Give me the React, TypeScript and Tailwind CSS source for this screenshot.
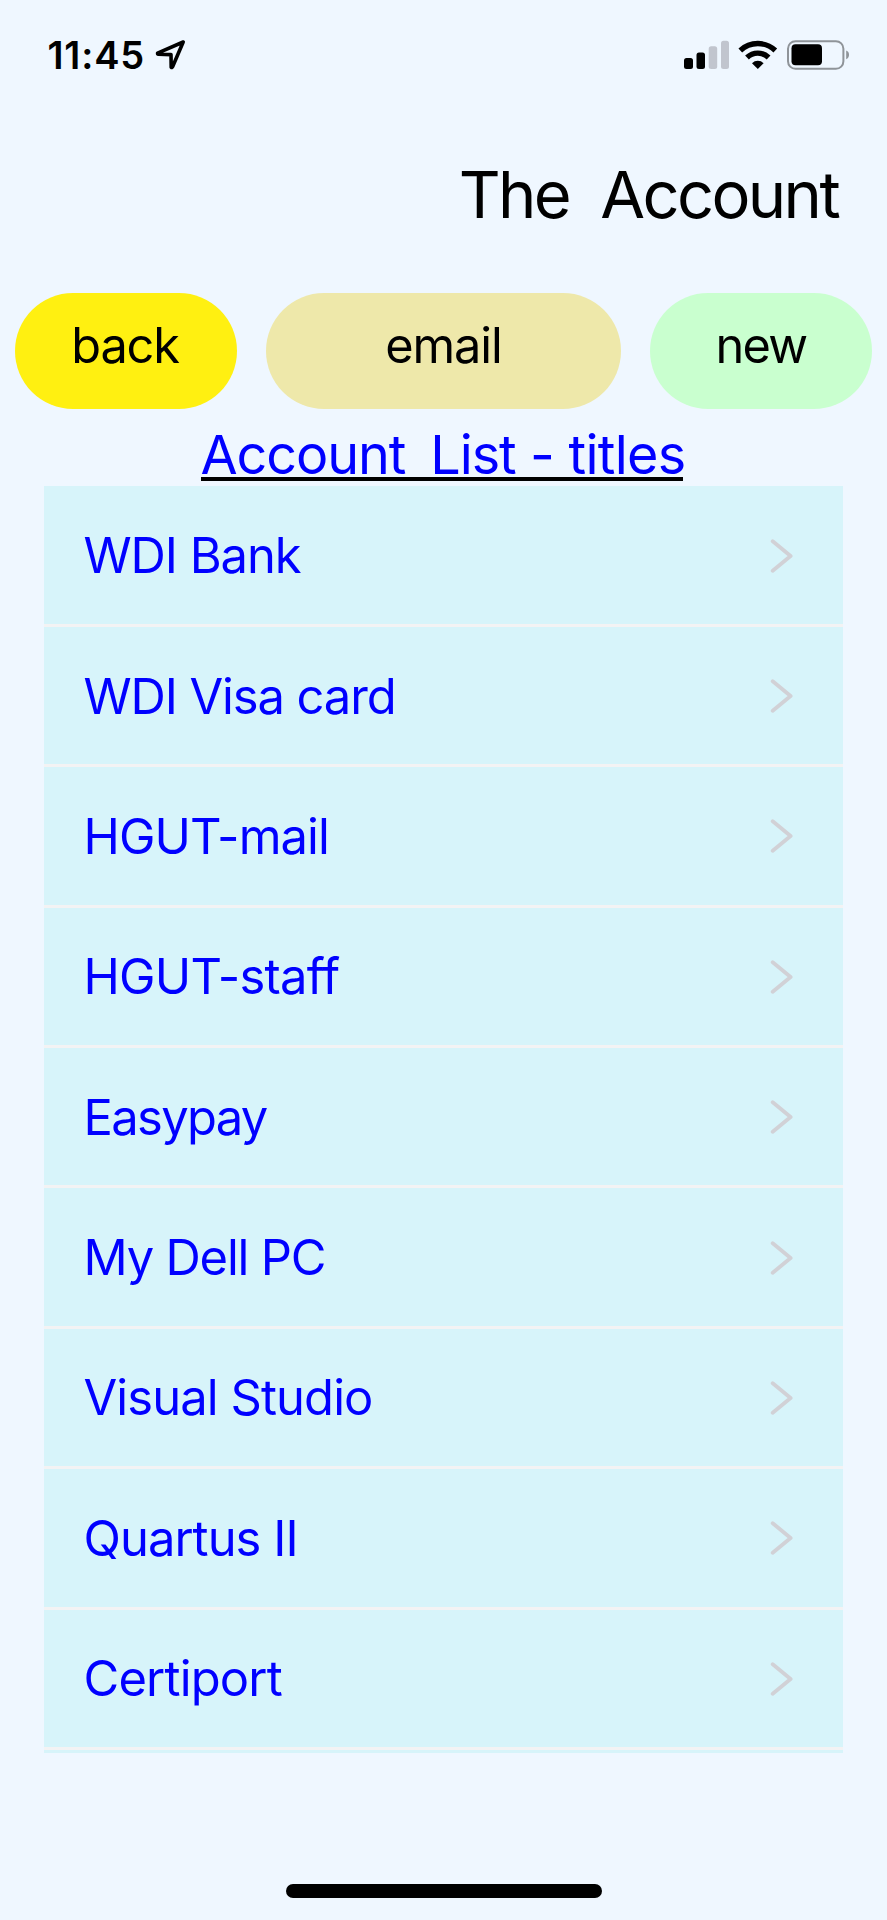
import { FC } from "react";
import clsx from "clsx";

type AccountType = {
  title: string;
  tracking: string;
};

const accounts: AccountType[] = [
  { title: "WDI Bank", tracking: "tracking-[-1.05px]" },
  { title: "WDI Visa card", tracking: "tracking-[-1.1px]" },
  { title: "HGUT-mail", tracking: "tracking-[-0.9px]" },
  { title: "HGUT-staff", tracking: "tracking-[-0.75px]" },
  { title: "Easypay", tracking: "tracking-[-1.65px]" },
  { title: "My Dell PC", tracking: "tracking-[-1.2px]" },
  { title: "Visual Studio", tracking: "tracking-[-0.9px]" },
  { title: "Quartus II", tracking: "tracking-[-0.95px]" },
  { title: "Certiport", tracking: "tracking-[-0.8px]" },
];

const StatusBar: FC = () => (
  <div className="flex items-center justify-between h-[110px] pl-[47.5px] pr-[37px] text-black">
    <div className="flex items-center">
      <span className="w-[106.5px] text-[38px] leading-none font-semibold whitespace-nowrap tracking-[0.8px]">
        11:45
      </span>
      <svg width="32" height="32" viewBox="0 0 32 32" fill="none">
        <path
          d="M29.2 3 L3.6 14.1 Q3.4 15.2 4.4 15.3 L17 15.6 L17.2 28.2 Q18 29 18.6 27.8 Z"
          stroke="black"
          strokeWidth="3.6"
          strokeLinejoin="round"
        />
      </svg>
    </div>
    <svg width="166" height="32" viewBox="684 39 166 32">
      <rect x="684" y="58" width="9" height="11" rx="2.5" />
      <rect x="696.5" y="52.5" width="8.5" height="16.5" rx="2.5" />
      <rect x="708.7" y="46.3" width="8.5" height="22.7" rx="2.5" fill="#c1c5ce" />
      <rect x="721" y="40.7" width="8" height="28.3" rx="2.5" fill="#c1c5ce" />
      <path
        d="M740.3 50.5 A25.5 25.5 0 0 1 775.3 50.5"
        fill="none"
        stroke="black"
        strokeWidth="5.4"
      />
      <path
        d="M747 57.5 A15.5 15.5 0 0 1 768.6 57.5"
        fill="none"
        stroke="black"
        strokeWidth="5.4"
      />
      <path d="M752 63.2 A8.3 8.3 0 0 1 763.6 63.2 L757.8 69 Z" />
      <rect
        x="788"
        y="41.2"
        width="55.4"
        height="27.6"
        rx="7.5"
        fill="none"
        stroke="#8f9499"
        strokeWidth="2"
      />
      <rect x="791.5" y="44.3" width="30.5" height="21" rx="4" />
      <path d="M846.2 50.5 Q849 51.5 849 54.8 Q849 58 846.2 59.2 Z" fill="#8f9499" />
    </svg>
  </div>
);

const PillButton: FC<{ label: string; className: string }> = ({ label, className }) => (
  <button
    className={clsx(
      "flex items-center justify-center h-[116px] pb-[9px] rounded-full text-[48.7px] leading-none text-black",
      className
    )}
  >
    {label}
  </button>
);

const AccountRow: FC<{ item: AccountType }> = ({ item }) => (
  <li>
    <div className="flex items-center justify-between h-[137.4px] pt-px pl-[39.5px] pr-[50px]">
      <span
        className={clsx(
          "pt-[2px] text-[48.9px] leading-none text-[#0000ff] whitespace-nowrap",
          item.tracking
        )}
      >
        {item.title}
      </span>
      <svg width="24" height="36" viewBox="0 0 24 36" fill="none">
        <path
          d="M3.7 3.2 L21.6 18 L3.7 32.8"
          stroke="#d1d1d6"
          strokeWidth="3.8"
          strokeLinecap="round"
          strokeLinejoin="round"
        />
      </svg>
    </div>
    <div className="h-[3px] bg-[#f3f3f4]" />
  </li>
);

const App: FC = () => {
  return (
    <div className="flex flex-col w-[887px] h-[1920px] bg-[#eff7ff] font-['Inter',sans-serif] overflow-hidden">
      <StatusBar />

      <h1 className="h-[183px] pt-[52px] pr-[49px] text-right text-[65px] leading-[65px] text-black whitespace-pre tracking-[-2.65px]">
        {"The  Account"}
      </h1>

      <div className="flex justify-between px-[15px]">
        <PillButton label="back" className="w-[222px] pr-[2px] bg-[#fff011] tracking-[-1.2px]" />
        <PillButton label="email" className="w-[355px] bg-[#eee8aa] tracking-[-1.1px]" />
        <PillButton label="new" className="w-[222px] bg-[#c9ffcf] tracking-[-1.7px]" />
      </div>

      <div className="flex h-[77.4px] pt-[18px] pl-[200.5px]">
        <h2 className="w-[482px] h-[54px] pt-px text-[53.9px] leading-[54px] text-[#0000ff] whitespace-pre border-b-4 border-black tracking-[-1.1px]">
          Account
          <span className="[word-spacing:-1.5px]">{"  List"}</span>
          <span className="tracking-[-0.7px]">{" - titles"}</span>
        </h2>
      </div>

      <ul className="w-[799px] ml-[44px] pb-[3px] bg-[#d7f4fa]">
        {accounts.map((item) => (
          <AccountRow key={item.title} item={item} />
        ))}
      </ul>

      {/* home indicator */}
      <div className="w-[316px] h-[14px] mt-auto mb-[22px] mx-auto rounded-full bg-black" />
    </div>
  );
};

export default App;
